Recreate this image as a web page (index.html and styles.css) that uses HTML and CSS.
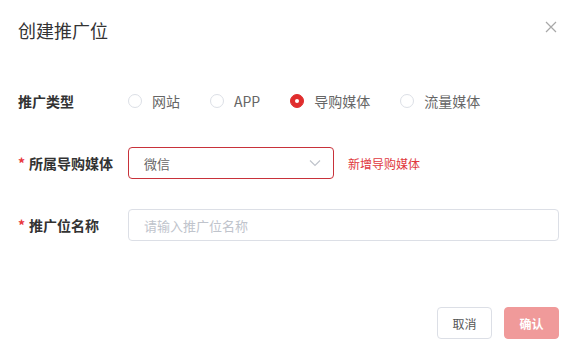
FILE: index.html
```html
<!DOCTYPE html>
<html lang="zh-CN">
<head>
  <meta charset="UTF-8" />
  <meta name="viewport" content="width=device-width, initial-scale=1.0"/>
  <title>创建推广位</title>
  <link rel="stylesheet" href="styles.css">
</head>
<body>

  <div class="dialog">
    <div class="dialog-header">
      <h1>创建推广位</h1>
      <span class="close">
        <svg width="12" height="12" viewBox="0 0 12 12"><path d="M1 1 L11 11 M11 1 L1 11" stroke="#a8a8a8" stroke-width="1.2" fill="none"/></svg>
      </span>
    </div>

    <div class="form">
      <div class="row">
        <label class="label">推广类型</label>
        <div class="radios">
          <span class="radio"><i class="circle"></i>网站</span>
          <span class="radio"><i class="circle"></i>APP</span>
          <span class="radio checked"><i class="circle"></i>导购媒体</span>
          <span class="radio"><i class="circle"></i>流量媒体</span>
        </div>
      </div>

      <div class="row">
        <label class="label required">所属导购媒体</label>
        <div class="select">
          <span>微信</span>
          <svg width="12" height="8" viewBox="0 0 12 8"><path d="M1 1.5 L6 6.5 L11 1.5" stroke="#c0c4cc" stroke-width="1.2" fill="none"/></svg>
        </div>
        <a class="add-link" href="#">新增导购媒体</a>
      </div>

      <div class="row">
        <label class="label required">推广位名称</label>
        <input class="input" type="text" placeholder="请输入推广位名称" />
      </div>
    </div>

    <div class="dialog-footer">
      <button class="btn">取消</button>
      <button class="btn primary">确认</button>
    </div>
  </div>

</body>
</html>
```

FILE: styles.css
```css
* {
  box-sizing: border-box;
  margin: 0;
  padding: 0;
}

body {
  background-color: white;
  color: #333;
  font-family: "Noto Sans CJK SC", "Noto Sans", sans-serif;
  font-size: 14px;
}

.dialog {
  width: 577px;
  height: 357px;
  padding: 0 18px;
}

.dialog-header {
  height: 60px;
  display: flex;
  align-items: center;
  justify-content: space-between;
}

.dialog-header h1 {
  font-size: 18px;
  font-weight: normal;
  color: #333;
}

.close {
  display: flex;
  margin-right: 2px;
  margin-top: -6px;
}

.form {
  padding-top: 25px;
}

.row {
  display: flex;
  align-items: center;
  height: 32px;
  margin-bottom: 30px;
}

.row:last-child {
  margin-bottom: 0;
}

.label {
  width: 110px;
  font-weight: bold;
  color: #333;
  font-size: 14px;
}

.label.required::before {
  content: "*";
  color: #e8363d;
  margin-right: 4px;
}

.radios {
  display: flex;
  align-items: center;
}

.radio {
  display: flex;
  align-items: center;
  margin-right: 30px;
  color: #666;
}

.circle {
  width: 14px;
  height: 14px;
  border: 1px solid #dcdfe6;
  border-radius: 50%;
  margin-right: 10px;
  display: inline-block;
}

.radio.checked .circle {
  border-color: #e02d2d;
  background: #e02d2d;
  position: relative;
}

.radio.checked .circle::after {
  content: "";
  position: absolute;
  left: 4px;
  top: 4px;
  width: 4px;
  height: 4px;
  border-radius: 50%;
  background: white;
}

.select {
  width: 206px;
  height: 32px;
  border: 1px solid #c8323a;
  border-radius: 4px;
  display: flex;
  align-items: center;
  justify-content: space-between;
  padding: 0 12px 0 15px;
  color: #666;
  font-size: 13px;
}

.add-link {
  margin-left: 14px;
  color: #e0383e;
  font-size: 12px;
  text-decoration: none;
}

.input {
  flex: 1;
  height: 32px;
  border: 1px solid #dcdfe6;
  border-radius: 4px;
  padding: 0 15px;
  font-family: inherit;
  font-size: 13px;
  outline: none;
}

.input::placeholder {
  color: #c0c4cc;
}

.dialog-footer {
  display: flex;
  justify-content: flex-end;
  gap: 12px;
  margin-top: 66px;
}

.btn {
  width: 55px;
  height: 32px;
  border: 1px solid #dcdfe6;
  border-radius: 4px;
  background: white;
  color: #555;
  font-family: inherit;
  font-size: 12px;
}

.btn.primary {
  border-color: #f09a9a;
  background: #f09a9a;
  color: white;
  font-weight: bold;
}
```
